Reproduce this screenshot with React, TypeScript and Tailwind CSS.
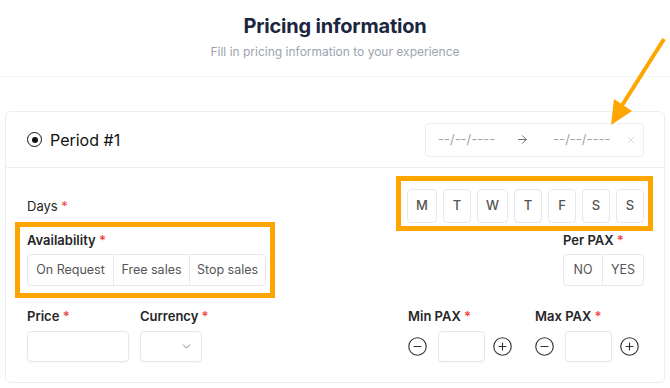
import { ChevronDown, ArrowRight, X, CircleMinus, CirclePlus } from "lucide-react";

const days = ["M", "T", "W", "T", "F", "S", "S"];

function Label({ text, bold = true }: { text: string; bold?: boolean }) {
  return (
    <div className={`text-[13px] leading-4 text-[#262626] ${bold ? "font-semibold" : "font-normal"}`}>
      {text} <span className="text-[#ef4444]">*</span>
    </div>
  );
}

function Stepper() {
  return (
    <div className="flex items-center">
      <CircleMinus className="-ml-[1px] h-[21px] w-[21px] text-[#333]" strokeWidth={1.3} />
      <div className="ml-[10px] h-[31px] w-[47px] rounded border border-[#e5e7eb] bg-white shadow-[0_1px_2px_rgba(0,0,0,0.04)]" />
      <CirclePlus className="ml-[7px] h-[21px] w-[21px] text-[#333]" strokeWidth={1.3} />
    </div>
  );
}

export default function App() {
  return (
    <main className="relative h-[388px] w-[670px] overflow-hidden bg-white font-['Inter',sans-serif]">
      {/* Header */}
      <div className="flex flex-col items-center border-b border-[#f3f4f6] pt-[12px] pb-[16px]">
        <h1 className="text-[20px] leading-7 font-bold tracking-[-0.2px] text-[#1b2640]">Pricing information</h1>
        <p className="mt-[4px] text-[12px] leading-4 text-[#9ca3af]">Fill in pricing information to your experience</p>
      </div>

      {/* Period card */}
      <div className="mx-[5px] mt-[34px] rounded-md border border-[#eeeeee]">
        <div className="flex h-[56px] items-center justify-between border-b border-[#eeeeee] pr-5 pl-[21px]">
          <div className="flex items-center gap-[8px]">
            <span className="flex h-[15px] w-[15px] items-center justify-center rounded-full border-[1.5px] border-[#111]">
              <span className="h-[6px] w-[6px] rounded-full bg-[#111]" />
            </span>
            <span className="text-[16px] text-[#111]">Period #1</span>
          </div>
          <div className="flex h-[34px] w-[219px] items-center rounded border border-[#eeeeee] pr-[6px] pl-[12px] text-[13px] whitespace-nowrap text-[#a3a3a3]">
            <span>--/--/----</span>
            <ArrowRight className="ml-[21px] h-[13px] w-[13px] shrink-0 text-[#555]" strokeWidth={1.6} />
            <span className="ml-[24px]">--/--/----</span>
            <X className="ml-auto h-[12px] w-[12px] shrink-0 text-[#d4d4d4]" strokeWidth={1.6} />
          </div>
        </div>

        <div className="px-5 pt-[21px] pb-[20px] pl-[21px]">
          {/* Days */}
          <div className="flex items-center justify-between">
            <Label text="Days" bold={false} />
            <div className="flex gap-[6px]">
              {days.map((d, i) => (
                <button
                  key={i}
                  className="h-[34px] min-w-[28px] rounded border border-[#e5e7eb] bg-white px-[8px] text-[13px] font-medium text-[#555]"
                >
                  {d}
                </button>
              ))}
            </div>
          </div>

          {/* Availability / Per PAX */}
          <div className="mt-[9px] flex items-end justify-between">
            <div>
              <Label text="Availability" />
              <div className="mt-[6px] flex h-[32px] rounded border border-[#e5e7eb] text-[12.5px] text-[#555]">
                <span className="flex w-[85px] items-center justify-center">On Request</span>
                <span className="flex w-[76px] items-center justify-center border-l border-[#e5e7eb]">Free sales</span>
                <span className="flex w-[76px] items-center justify-center border-l border-[#e5e7eb]">Stop sales</span>
              </div>
            </div>
            <div>
              <Label text="Per PAX" />
              <div className="mt-[6px] flex h-[32px] rounded border border-[#e5e7eb] text-[12.5px] text-[#555]">
                <span className="flex w-[38px] items-center justify-center">NO</span>
                <span className="flex w-[41px] items-center justify-center border-l border-[#e5e7eb]">YES</span>
              </div>
            </div>
          </div>

          {/* Price / Currency / PAX */}
          <div className="mt-[22px] flex items-start justify-between">
            <div className="flex gap-[11px]">
              <div>
                <Label text="Price" />
                <div className="mt-[7px] h-[31px] w-[102px] rounded border border-[#e5e7eb] shadow-[0_1px_2px_rgba(0,0,0,0.04)]" />
              </div>
              <div>
                <Label text="Currency" />
                <div className="mt-[7px] flex h-[31px] w-[62px] items-center justify-end rounded border border-[#e5e7eb] pr-[8px] shadow-[0_1px_2px_rgba(0,0,0,0.04)]">
                  <ChevronDown className="h-[13px] w-[13px] text-[#666]" strokeWidth={1.5} />
                </div>
              </div>
            </div>
            <div className="mr-[4px] flex gap-[22px]">
              <div>
                <Label text="Min PAX" />
                <div className="mt-[7px]">
                  <Stepper />
                </div>
              </div>
              <div>
                <Label text="Max PAX" />
                <div className="mt-[7px]">
                  <Stepper />
                </div>
              </div>
            </div>
          </div>
        </div>
      </div>

      {/* Annotation overlays */}
      <div className="pointer-events-none absolute top-[176px] left-[396px] h-[55px] w-[257px] border-[5px] border-[#ffa500]" />
      <div className="pointer-events-none absolute top-[222px] left-[15px] h-[76px] w-[260px] border-[5px] border-[#ffa500]" />
      <svg className="pointer-events-none absolute top-0 left-0" width="670" height="388">
        <line x1="664" y1="39" x2="621" y2="107" stroke="#ffa500" strokeWidth="4" />
        <polygon points="611,125 614,99 632,111" fill="#ffa500" />
      </svg>
    </main>
  );
}
